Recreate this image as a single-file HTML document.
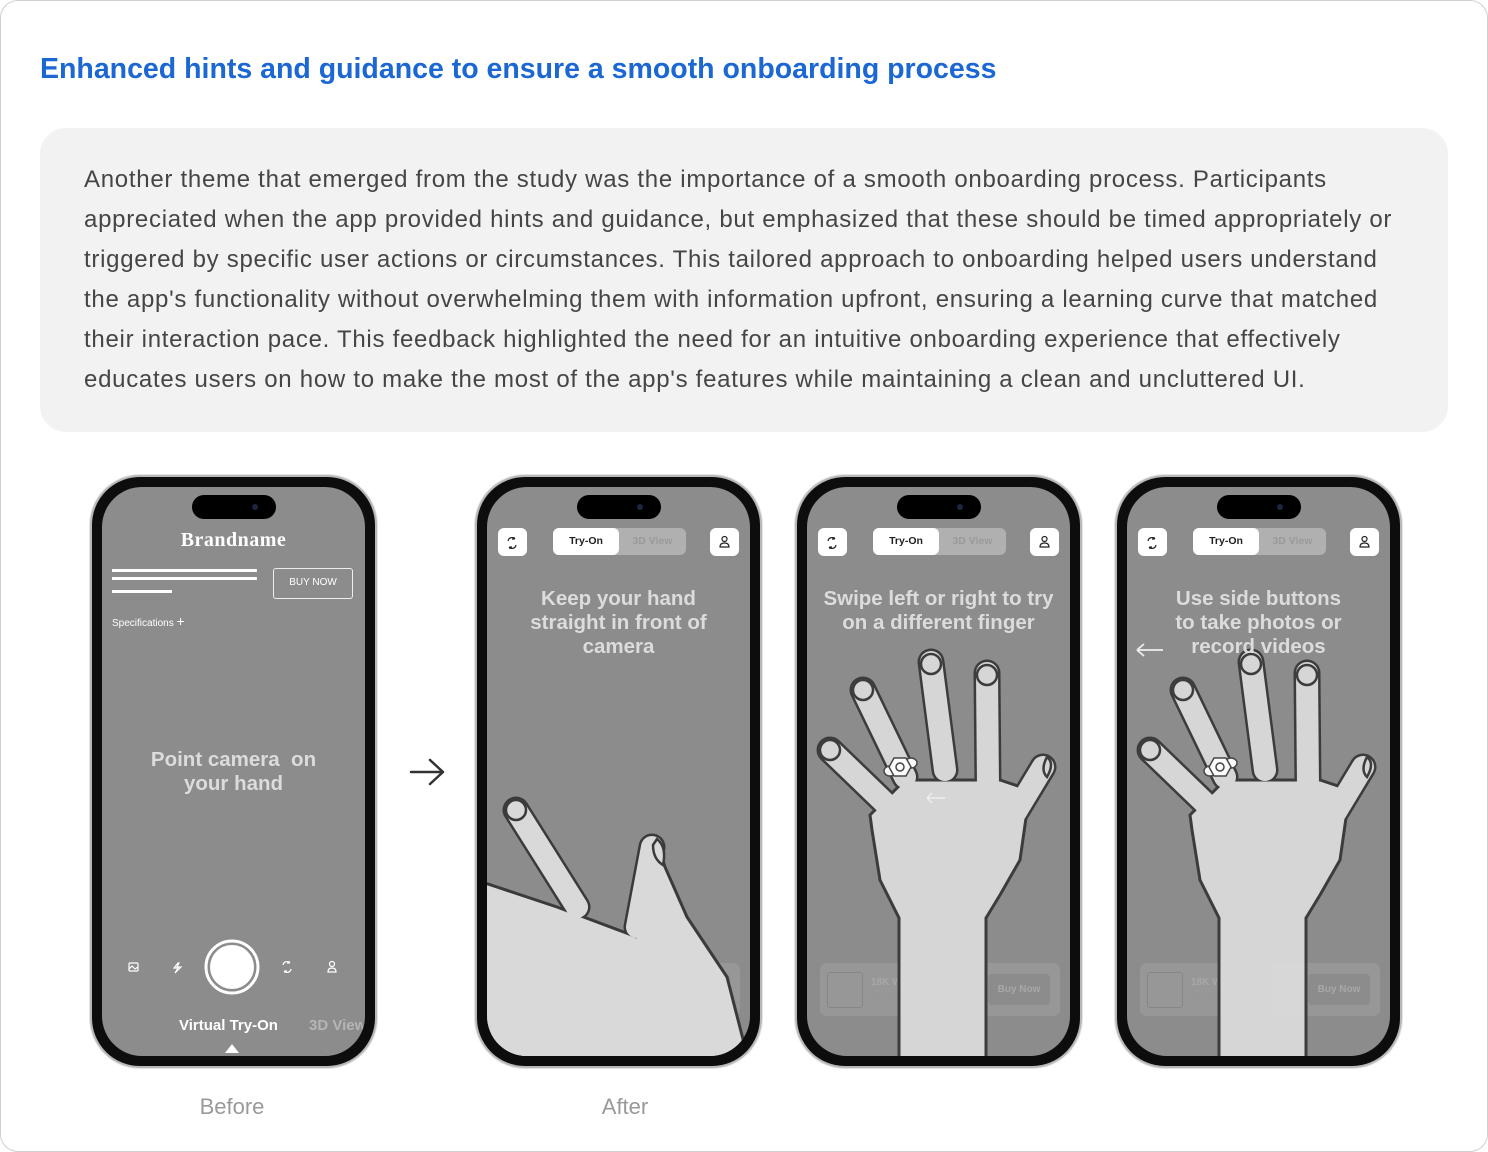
<!DOCTYPE html>
<html><head><meta charset="utf-8"><style>
*{margin:0;padding:0;box-sizing:border-box}
body{width:1488px;height:1152px;background:#fff;font-family:"Liberation Sans",sans-serif;position:relative;overflow:hidden}
.frame{position:absolute;left:0;top:0;width:1488px;height:1152px;border:1.5px solid #cfcfcf;border-radius:18px}
h1{position:absolute;left:40px;top:53px;font-size:28.5px;color:#1b67d3;font-weight:bold;white-space:nowrap;letter-spacing:0px}
.card{position:absolute;left:40px;top:128px;width:1408px;height:304px;background:#f2f2f2;border-radius:26px}
.card p{position:absolute;left:44px;top:32px;font-size:24px;line-height:40px;color:#454545;white-space:nowrap;letter-spacing:0.72px}
.phone{position:absolute;top:475px;width:287px;height:593px;border-radius:50px;background:#0d0d0d;border:2px solid #b8b8b8;box-shadow:0 0 0 1px #e4e4e4}
.scr{position:absolute;left:10px;top:10px;right:10px;bottom:10px;border-radius:40px;background:#8c8c8c;overflow:hidden}
.island{position:absolute;left:50%;top:8px;width:84px;height:24px;margin-left:-42px;background:#000;border-radius:12px}
.island:after{content:"";position:absolute;right:18px;top:9px;width:6px;height:6px;border-radius:3px;background:#1c2440}
.t{position:absolute;left:0;right:0;text-align:center;font-weight:bold;font-size:20.5px;line-height:24px;color:#dcdcdc}
.btn{position:absolute;top:41px;width:29px;height:28px;background:#fff;border-radius:6px}
.seg{position:absolute;left:66px;top:41px;width:133px;height:27px;background:#b0b0b0;border-radius:6px;font-size:10.5px;font-weight:bold}
.seg .a{position:absolute;left:0;top:0;width:66px;height:27px;background:#fff;border-radius:6px;text-align:center;line-height:27px;color:#222}
.seg .b{position:absolute;left:66px;width:67px;text-align:center;line-height:27px;color:#9a9a9a}
.bc{position:absolute;left:13px;top:476px;width:240px;height:53px;background:rgba(255,255,255,0.1);border-radius:7px}
.bc .im{position:absolute;left:7px;top:9px;width:36px;height:36px;border:1.5px solid rgba(120,120,120,0.5);border-radius:3px}
.bc .n{position:absolute;left:51px;top:14px;font-size:10px;font-weight:bold;color:rgba(180,180,180,0.6);white-space:nowrap}
.bc .s{position:absolute;left:51px;top:28px;font-size:10px;color:rgba(150,150,150,0.5);white-space:nowrap}
.bc .bn{position:absolute;left:168px;top:11px;width:62px;height:31px;background:rgba(120,120,120,0.35);border-radius:4px;font-size:10px;font-weight:bold;color:rgba(180,180,180,0.7);text-align:center;line-height:31px}
.lbl{position:absolute;top:1094px;font-size:22px;color:#999;text-align:center;width:200px}
</style></head><body>
<div class="frame"></div>
<h1>Enhanced hints and guidance to ensure a smooth onboarding process</h1>
<div class="card"><p>Another theme that emerged from the study was the importance of a smooth onboarding process. Participants<br>appreciated when the app provided hints and guidance, but emphasized that these should be timed appropriately or<br>triggered by specific user actions or circumstances. This tailored approach to onboarding helped users understand<br>the app's functionality without overwhelming them with information upfront, ensuring a learning curve that matched<br>their interaction pace. This feedback highlighted the need for an intuitive onboarding experience that effectively<br>educates users on how to make the most of the app's features while maintaining a clean and uncluttered UI.</p></div>

<!-- Phone 1 -->
<div class="phone" style="left:90px">
 <div class="scr">
  <div class="island"></div>
  <div style="position:absolute;left:0;right:0;top:42px;text-align:center;font-family:'Liberation Serif',serif;font-size:20px;font-weight:bold;color:#fff;letter-spacing:0.5px">Brandname</div>
  <div style="position:absolute;left:10px;top:82px;width:145px;height:3px;background:#fff"></div>
  <div style="position:absolute;left:10px;top:90px;width:145px;height:3px;background:#fff"></div>
  <div style="position:absolute;left:10px;top:103px;width:60px;height:3px;background:#fff"></div>
  <div style="position:absolute;left:171px;top:81px;width:80px;height:31px;border:1.5px solid #eee;border-radius:3px;color:#fff;font-size:10px;text-align:center;line-height:28px">BUY NOW</div>
  <div style="position:absolute;left:10px;top:126px;color:#fff;font-size:10px">Specifications <span style="font-size:14px">+</span></div>
  <div class="t" style="top:261px">Point camera&nbsp; on<br>your hand</div>
  <svg style="position:absolute;left:0;top:440px" width="267" height="120" viewBox="0 0 267 120" fill="none" stroke="#fff" stroke-width="1.2">
   <rect x="27" y="36" width="9" height="8" rx="1"/><path d="M27 42l3-3 3 3 3-2"/>
   <path d="M76 36l-4 5h4l-3 5 6-6h-4l2-4z"/>
   <circle cx="130" cy="40" r="26" stroke-width="3"/><circle cx="130" cy="40" r="22" fill="#fff" stroke="none"/>
   <path d="M181 38a4 4 0 0 1 7-2M189 42a4 4 0 0 1-7 2M187 34v2h-2M183 46v-2h2"/>
   <circle cx="230" cy="37" r="2.5"/><path d="M226 45c0-3 2-4 4-4s4 1 4 4z"/>
  </svg>
  <div style="position:absolute;left:77px;top:530px;font-size:15px;font-weight:bold;color:#fff;white-space:nowrap">Virtual Try-On</div>
  <div style="position:absolute;left:207px;top:530px;font-size:15px;font-weight:bold;color:#b5b5b5;white-space:nowrap">3D View</div>
  <div style="position:absolute;left:123px;top:557px;width:0;height:0;border-left:7px solid transparent;border-right:7px solid transparent;border-bottom:9px solid #fff"></div>
 </div>
</div>

<svg style="position:absolute;left:408px;top:758px" width="38" height="30" viewBox="0 0 38 30" fill="none" stroke="#333" stroke-width="2.5" stroke-linecap="round" stroke-linejoin="round"><path d="M3 14h32M22 2l13 12-13 12"/></svg>

<!-- Phone 2 -->
<div class="phone" style="left:475px">
 <div class="scr">
  <div class="island"></div>
  <div class="bc"><div class="im"></div><div class="n">18K White Gold Ring</div><div class="s">by Brandname</div><div class="bn">Buy Now</div></div>
  <svg style="position:absolute;left:0;top:0" width="267" height="573" viewBox="0 0 267 573">
   <g stroke="#3a3a3a" stroke-width="27" stroke-linecap="round" fill="none">
    <path d="M29 323L90 420"/><path d="M-20 420L60 480"/><path d="M-20 480L45 530"/><path d="M-20 545L40 573"/>
    <path d="M165 360L150 440"/>
   </g>
   <path d="M-5 395L70 420L150 450L150 380L170 355L178 380L200 430L240 490L258 560L262 575L-5 575Z" fill="#d9d9d9" stroke="#3a3a3a" stroke-width="3"/>
   <g stroke="#d9d9d9" stroke-width="22" stroke-linecap="round" fill="none">
    <path d="M29 323L90 420"/><path d="M-20 420L60 480"/><path d="M-20 480L45 530"/><path d="M-20 545L40 573"/>
    <path d="M165 360L150 440"/>
   </g>
   <path d="M-5 410L150 455L150 395L170 365L190 420L230 490" fill="#d9d9d9"/>
   <circle cx="29" cy="323" r="10" fill="#d9d9d9" stroke="#3a3a3a" stroke-width="2.5"/>
   <path d="M170 352Q180 360 176 378Q166 372 166 358Z" fill="#d9d9d9" stroke="#3a3a3a" stroke-width="2.5"/>
  </svg>
  <div class="btn" style="left:11px"></div><div class="seg"><div class="a">Try-On</div><div class="b">3D View</div></div><div class="btn" style="left:223px"></div>
  <svg style="position:absolute;left:0;top:0" width="267" height="80" fill="none" stroke="#222" stroke-width="1.2"><path d="M21 54a4 4 0 0 1 7-2M29 58a4 4 0 0 1-7 2M27 50v2h-2M23 62v-2h2"/><circle cx="237.5" cy="52" r="2.5"/><path d="M233 60c0-3 2-4 4.5-4s4.5 1 4.5 4z"/></svg>
  <div class="t" style="top:100px">Keep your hand<br>straight in front of<br>camera</div>
 </div>
</div>

<!-- Phone 3 -->
<div class="phone" style="left:795px">
 <div class="scr">
  <div class="island"></div>
  <div class="bc"><div class="im"></div><div class="n">18K White Gold Ring</div><div class="s">by Brandname</div><div class="bn">Buy Now</div></div>
  <div class="btn" style="left:11px"></div><div class="seg"><div class="a">Try-On</div><div class="b">3D View</div></div><div class="btn" style="left:223px"></div>
  <svg style="position:absolute;left:0;top:0" width="267" height="80" fill="none" stroke="#222" stroke-width="1.2"><path d="M21 54a4 4 0 0 1 7-2M29 58a4 4 0 0 1-7 2M27 50v2h-2M23 62v-2h2"/><circle cx="237.5" cy="52" r="2.5"/><path d="M233 60c0-3 2-4 4.5-4s4.5 1 4.5 4z"/></svg>
  <div class="t" style="top:100px">Swipe left or right to try<br>on a different finger</div>
  <svg style="position:absolute;left:0;top:0" width="267" height="573" viewBox="0 0 267 573">
   <g id="hand" opacity="0.97">
   <g stroke="#3a3a3a" stroke-width="27" stroke-linecap="round" fill="none">
    <path d="M23 263L80 318"/><path d="M56 203L98 290"/><path d="M124 175L138 283"/><path d="M180 186L181 300"/><path d="M236 280L198 343"/>
   </g>
   <path d="M63 328L98 293L193 293L223 303L213 373L193 408L179 431L179 575L92 575L92 431L73 393L65 343Z" fill="#d9d9d9" stroke="#3a3a3a" stroke-width="3"/>
   <g stroke="#d9d9d9" stroke-width="22" stroke-linecap="round" fill="none">
    <path d="M23 263L80 318"/><path d="M56 203L98 290"/><path d="M124 175L138 283"/><path d="M180 186L181 300"/><path d="M236 280L198 343"/>
   </g>
   <path d="M70 330L100 300L190 300L215 310L205 370L185 400L172 425L172 575L99 575L99 430L80 390Z" fill="#d9d9d9"/>
   <g fill="#d9d9d9" stroke="#3a3a3a" stroke-width="2.5">
    <circle cx="23" cy="263" r="10"/><circle cx="56" cy="203" r="10"/><circle cx="124" cy="177" r="10"/><circle cx="180" cy="188" r="10"/>
    <path d="M240 270Q248 276 240 290Q233 283 240 270Z"/>
   </g>
   <g transform="translate(93 280)" fill="#fff" stroke="#444" stroke-width="1.5">
    <ellipse cx="-10" cy="4" rx="6" ry="5"/><ellipse cx="11" cy="-4" rx="6" ry="5"/>
    <path d="M-6-9L6-9L11 0L6 9L-6 9L-11 0Z"/><circle cx="0" cy="0" r="4"/>
   </g>
   </g>
   <path d="M120 311h18M120 311l5-5M120 311l5 5" stroke="#eee" stroke-width="1.5" fill="none"/>
  </svg>
 </div>
</div>

<!-- Phone 4 -->
<div class="phone" style="left:1115px">
 <div class="scr">
  <div class="island"></div>
  <div class="bc"><div class="im"></div><div class="n">18K White Gold Ring</div><div class="s">by Brandname</div><div class="bn">Buy Now</div></div>
  <div class="btn" style="left:11px"></div><div class="seg"><div class="a">Try-On</div><div class="b">3D View</div></div><div class="btn" style="left:223px"></div>
  <svg style="position:absolute;left:0;top:0" width="267" height="80" fill="none" stroke="#222" stroke-width="1.2"><path d="M21 54a4 4 0 0 1 7-2M29 58a4 4 0 0 1-7 2M27 50v2h-2M23 62v-2h2"/><circle cx="237.5" cy="52" r="2.5"/><path d="M233 60c0-3 2-4 4.5-4s4.5 1 4.5 4z"/></svg>
  <svg style="position:absolute;left:0;top:0" width="267" height="573" viewBox="0 0 267 573"><use href="#hand"/>
   <path d="M10 163h26M10 163l7-6M10 163l7 6" stroke="#eee" stroke-width="1.8" fill="none"/></svg>
  <div class="t" style="top:100px">Use side buttons<br>to take photos or<br>record videos</div>
 </div>
</div>

<div class="lbl" style="left:132px">Before</div>
<div class="lbl" style="left:525px">After</div>
</body></html>
